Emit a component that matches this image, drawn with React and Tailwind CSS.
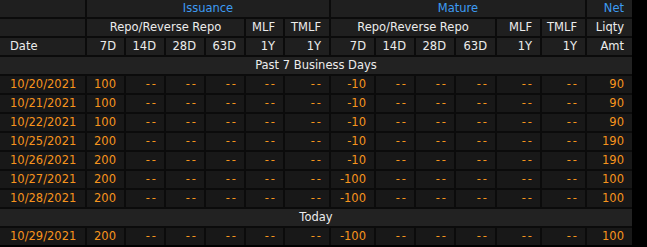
import React from "react";

const past = [
  ["10/20/2021", "100", "-10", "90"],
  ["10/21/2021", "100", "-10", "90"],
  ["10/22/2021", "100", "-10", "90"],
  ["10/25/2021", "200", "-10", "190"],
  ["10/26/2021", "200", "-10", "190"],
  ["10/27/2021", "200", "-100", "100"],
  ["10/28/2021", "200", "-100", "100"],
];
const today = [["10/29/2021", "200", "-100", "100"]];

const HB = "bg-[#1f1f1f] flex items-center";
const H = "bg-[#1f1f1f] text-[#ececec] flex items-center";
const HBlue = "bg-[#1f1f1f] text-[#3d9bf2] flex items-center";
const D = "bg-[#181818] text-[#f7941d] flex items-center justify-end pr-2";

function Dash() {
  return (
    <div className="bg-[#181818] text-[#f7941d] flex items-center justify-end pr-2">
      <span className="tracking-[2px] mr-[-2px]">--</span>
    </div>
  );
}

function DataRow({ r }) {
  const [date, iss, mat, net] = r;
  return (
    <>
      <div className="bg-[#181818] text-[#f7941d] flex items-center pl-[10px]">{date}</div>
      <div className={D}>{iss}</div>
      {[0, 1, 2, 3, 4].map((i) => (
        <Dash key={"a" + i} />
      ))}
      <div className={D}>{mat}</div>
      {[0, 1, 2, 3, 4].map((i) => (
        <Dash key={"b" + i} />
      ))}
      <div className={D}>{net}</div>
    </>
  );
}

export default function App() {
  return (
    <div className="w-[647px] h-[247px] bg-black overflow-hidden" style={{ fontFamily: '"DejaVu Sans", Verdana, sans-serif' }}>
      <div className="w-[632px] bg-[#0b0b0b] grid grid-cols-[85px_37px_38px_38px_38px_37px_44px_43px_38px_38px_39px_43px_43px_45px] auto-rows-[17px] gap-[2px] text-[11.5px] leading-none">
        {/* row 1 */}
        <div className={HB}></div>
        <div className={`${HBlue} col-span-6 justify-center`}>Issuance</div>
        <div className={`${HBlue} col-span-6 justify-center`}>Mature</div>
        <div className={`${HBlue} justify-end pr-2`}>Net</div>
        {/* row 2 */}
        <div className={HB}></div>
        <div className={`${H} col-span-4 justify-center`}>Repo/Reverse Repo</div>
        <div className={`${H} justify-end pr-2`}>MLF</div>
        <div className={`${H} justify-end pr-2`}>TMLF</div>
        <div className={`${H} col-span-4 justify-center`}>Repo/Reverse Repo</div>
        <div className={`${H} justify-end pr-2`}>MLF</div>
        <div className={`${H} justify-end pr-2`}>TMLF</div>
        <div className={`${H} justify-end pr-2`}>Liqty</div>
        {/* row 3 */}
        <div className={`${H} pl-[10px]`}>Date</div>
        {["7D", "14D", "28D", "63D", "1Y", "1Y", "7D", "14D", "28D", "63D", "1Y", "1Y", "Amt"].map((t, i) => (
          <div key={i} className={`${H} justify-end pr-2`}>{t}</div>
        ))}
        {/* section */}
        <div className="col-span-14 bg-[#222222] text-[#ececec] flex items-center justify-center">Past 7 Business Days</div>
        {past.map((r) => (
          <DataRow key={r[0]} r={r} />
        ))}
        <div className="col-span-14 bg-[#222222] text-[#ececec] flex items-center justify-center">Today</div>
        {today.map((r) => (
          <DataRow key={r[0]} r={r} />
        ))}
      </div>
    </div>
  );
}
